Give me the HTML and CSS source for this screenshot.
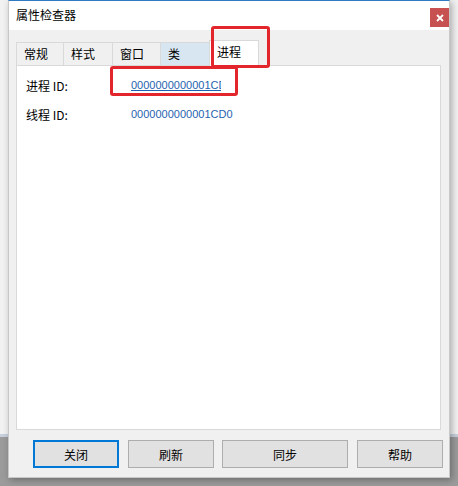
FILE: index.html
```html
<!DOCTYPE html>
<html lang="zh-CN">
<head>
<meta charset="utf-8">
<title>属性检查器</title>
<link rel="stylesheet" href="styles.css">
</head>
<body>
<div class="desktop">
  <div class="window">
    <div class="titlebar">
      <span class="title">属性检查器</span>
      <span class="close"><svg width="8" height="8" viewBox="0 0 8 8"><path d="M1 1 L7 7 M7 1 L1 7" stroke="#fff" stroke-width="1.8"/></svg></span>
    </div>
    <div class="content">
      <div class="tabs">
        <div class="tab t1">常规</div>
        <div class="tab t2">样式</div>
        <div class="tab t3">窗口</div>
        <div class="tab t4 hover">类</div>
        <div class="tab sel">进程</div>
      </div>
      <div class="panel">
        <div class="row">
          <span class="label">进程 ID:</span>
          <a class="value link">0000000000001CD0</a>
        </div>
        <div class="row">
          <span class="label">线程 ID:</span>
          <span class="value">0000000000001CD0</span>
        </div>
      </div>
      <div class="buttons">
        <button class="btn focus">关闭</button>
        <button class="btn">刷新</button>
        <button class="btn wide">同步</button>
        <button class="btn last">帮助</button>
      </div>
    </div>
  </div>
  <div class="mark mark-tab"></div>
  <div class="mark mark-link"></div>
</div>
</body>
</html>
```

FILE: styles.css
```css
html, body {
  margin: 0;
  padding: 0;
}
body {
  width: 458px;
  height: 486px;
  overflow: hidden;
  font-family: "Noto Sans CJK SC", "Noto Sans", sans-serif;
  font-size: 12px;
  color: #000;
}
.desktop {
  position: relative;
  width: 458px;
  height: 486px;
  background: linear-gradient(to bottom, #f2f2f2 0, #f2f2f2 434px, #c7d0dc 434px, #c7d0dc 437px, #9b9b9b 437px, #9b9b9b 100%);
}
.window {
  box-sizing: border-box;
  margin-left: 8px;
  width: 442px;
  height: 478px;
  background: #f0f0f0;
  border: 1px solid #c8c8c8;
  border-top-color: #2f7ac3;
  box-shadow: 2px 2px 7px rgba(0, 0, 0, 0.3);
  display: flex;
  flex-direction: column;
}
.titlebar {
  height: 29px;
  background: #fff;
  display: flex;
  justify-content: space-between;
  align-items: flex-start;
  padding-left: 7px;
}
.title {
  line-height: 28px;
  font-size: 12px;
  color: #000;
}
.close {
  margin-top: 7px;
  width: 19px;
  height: 19px;
  background: #c75050;
  display: flex;
  align-items: center;
  justify-content: center;
}
.content {
  padding: 10px 0 0 7px;
  display: flex;
  flex-direction: column;
}
.tabs {
  display: flex;
  align-items: flex-end;
  height: 25px;
  position: relative;
  z-index: 1;
}
.tab {
  box-sizing: border-box;
  height: 23px;
  border: 1px solid #d9d9d9;
  border-bottom: none;
  margin-right: -1px;
  padding-left: 7px;
  line-height: 22px;
  background: #f0f0f0;
}
.t1 { width: 48px; }
.t2 { width: 50px; }
.t3 { width: 49px; }
.t4 { width: 50px; }
.hover {
  background: #d8e6f2;
}
.sel {
  width: 50px;
  height: 26px;
  margin-bottom: -1px;
  background: #fff;
  line-height: 22px;
  padding-left: 7px;
}
.panel {
  box-sizing: border-box;
  width: 425px;
  height: 365px;
  background: #fff;
  border: 1px solid #d9d9d9;
  padding: 9px 0 0 9px;
  display: flex;
  flex-direction: column;
  gap: 9px;
}
.row {
  display: flex;
  height: 20px;
  align-items: center;
}
.label {
  width: 105px;
  font-size: 12px;
  font-family: "Noto Sans CJK SC", sans-serif;
}
.value {
  font-family: "Liberation Sans", Arial, sans-serif;
  font-size: 11px;
  color: #1f63b0;
}
.link {
  text-decoration: underline;
  width: 90px;
  overflow: hidden;
  white-space: nowrap;
}
.buttons {
  display: flex;
  margin-top: 10px;
  padding-left: 17px;
}
.btn {
  box-sizing: border-box;
  flex-shrink: 0;
  width: 86px;
  height: 28px;
  margin: 0 8px 0 0;
  padding: 0;
  background: #e1e1e1;
  border: 1px solid #adadad;
  font-family: "Noto Sans CJK SC", sans-serif;
  font-size: 12px;
  color: #000;
}
.btn.wide { width: 126px; margin-right: 9px; }
.btn.last { margin-right: 0; }
.btn.focus {
  border: 2px solid #0078d7;
  margin-right: 9px;
}
.mark {
  position: absolute;
  box-sizing: border-box;
  border: 3px solid #e3262b;
  border-radius: 3px;
  z-index: 5;
}
.mark-tab {
  left: 211px;
  top: 26px;
  width: 59px;
  height: 42px;
}
.mark-link {
  left: 110px;
  top: 66px;
  width: 128px;
  height: 30px;
}
```
